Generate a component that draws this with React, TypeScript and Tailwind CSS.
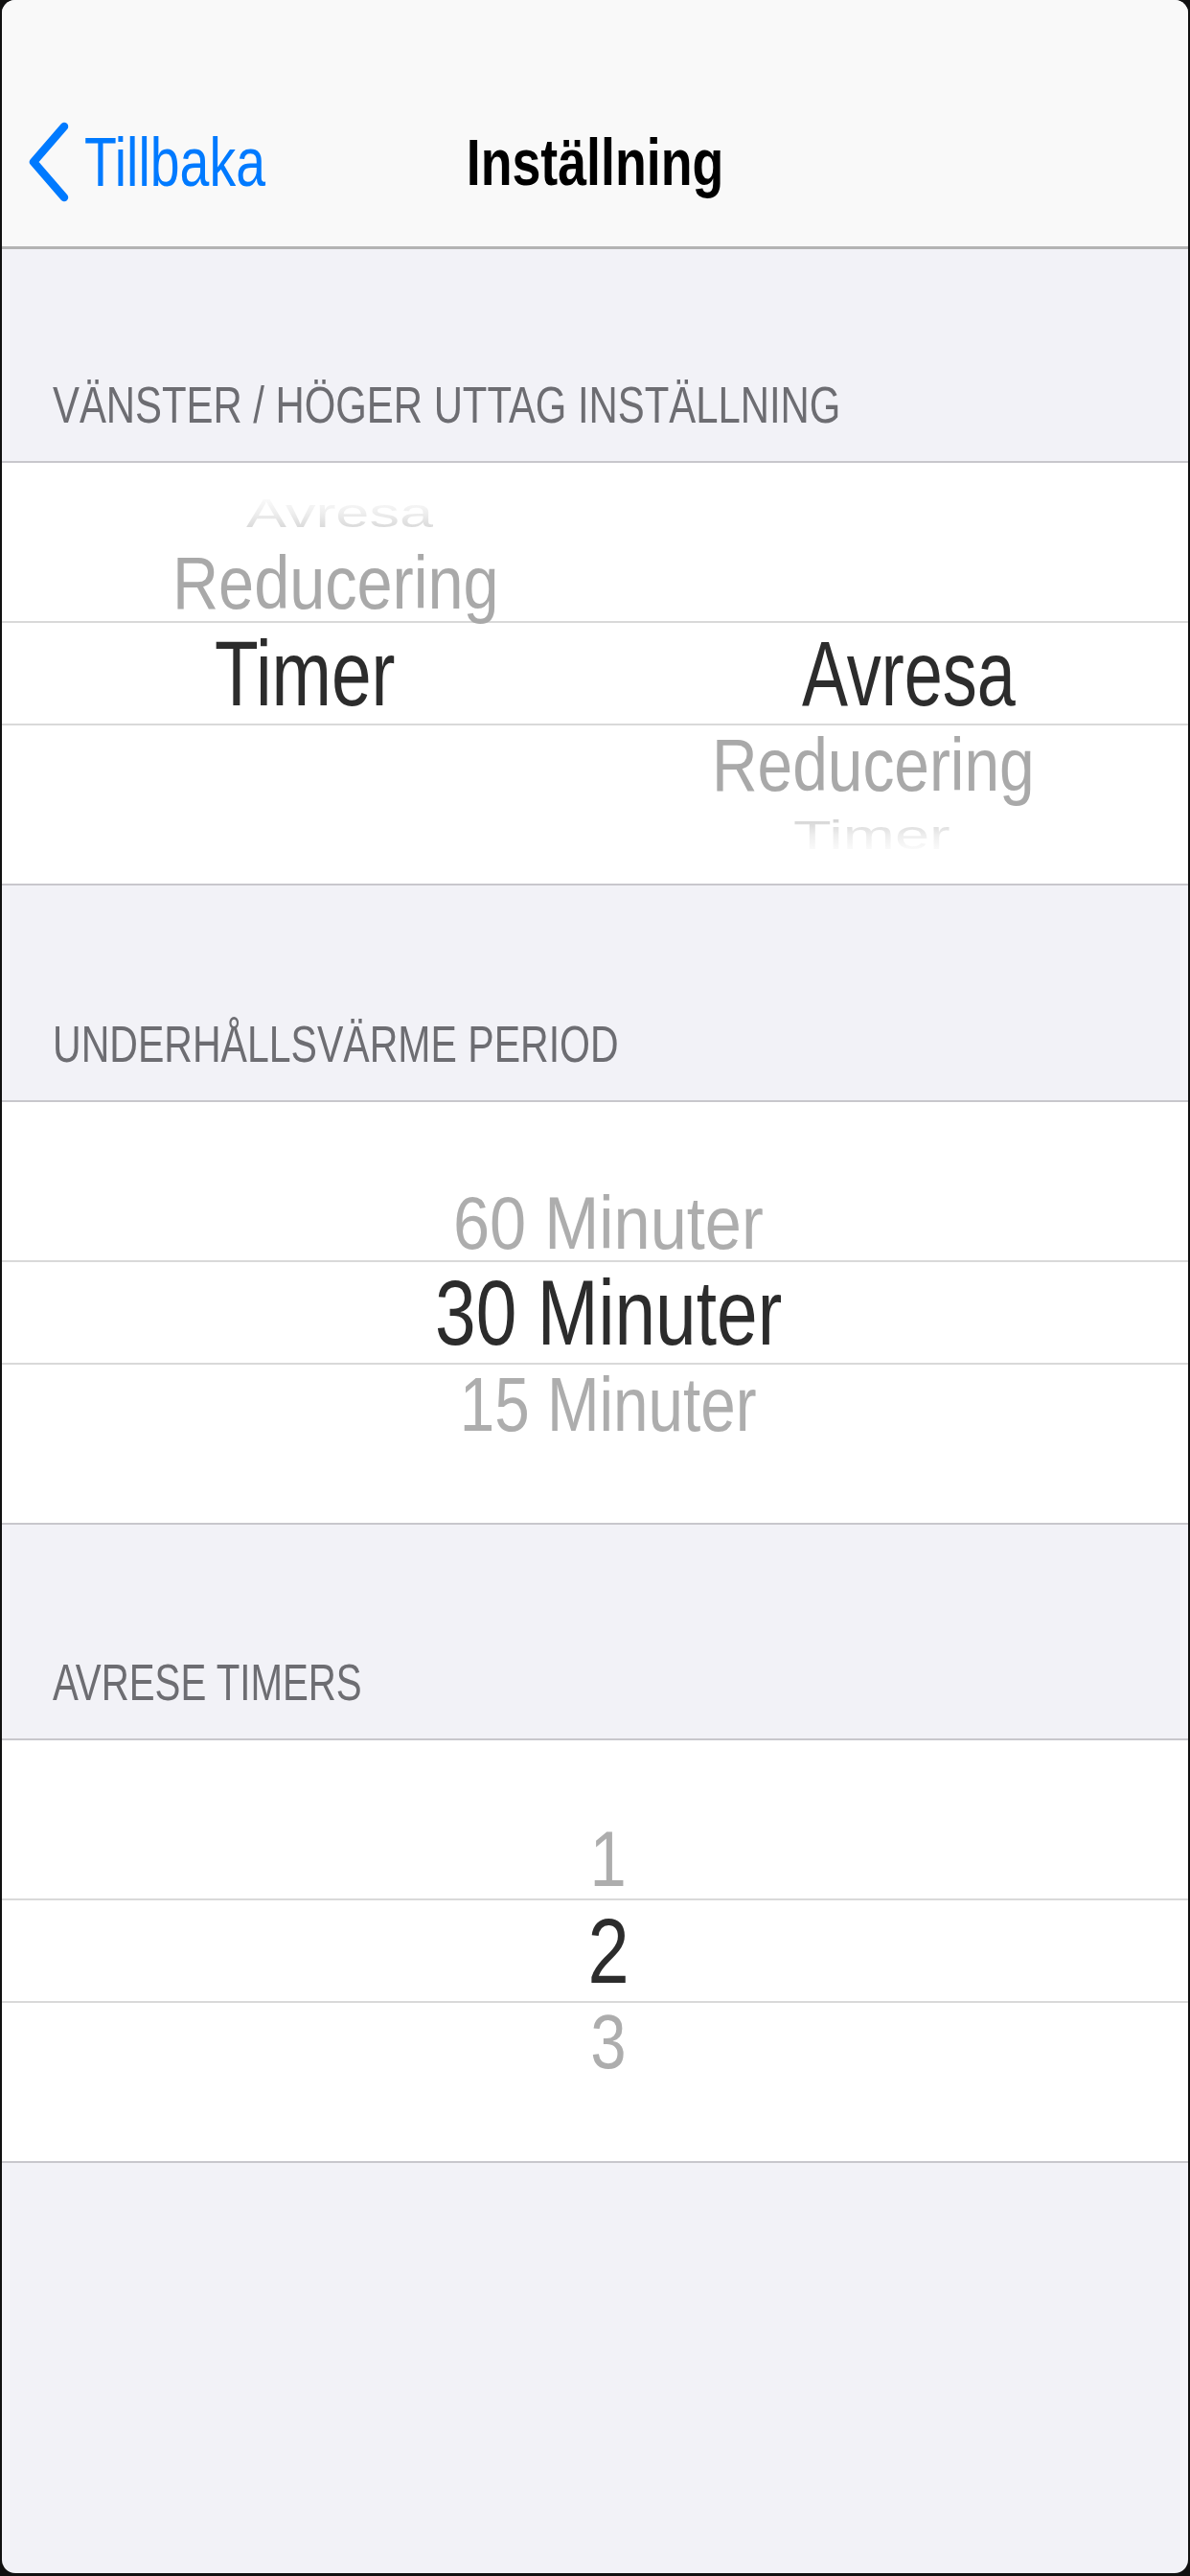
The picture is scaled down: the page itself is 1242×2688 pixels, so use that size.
import React from 'react';

const SectionHeader: React.FC<{ title: string; h: string; sx: string }> = ({ title, h, sx }) => {
  return (
    <div className={`${h} shrink-0 flex items-end pb-[32px] pl-[53px]`}>
      <span className={`inline-block whitespace-nowrap origin-left text-[54px] leading-none text-[#6d6d72] ${sx}`}>
        {title}
      </span>
    </div>
  );
};

const BackChevron = () => (
  <svg width="48" height="90" viewBox="0 0 48 90" fill="none">
    <polyline
      points="40,8 8,45 40,82"
      stroke="#007aff"
      strokeWidth={8.5}
      strokeLinecap="round"
      strokeLinejoin="round"
    />
  </svg>
);

export default function App() {
  return (
    <div className="w-[1242px] h-[2688px] bg-[#111111] px-[2px] pb-[3px] overflow-hidden font-['Liberation_Sans',Arial,sans-serif]">
      <div className="h-full rounded-[14px] overflow-hidden bg-[#f2f2f7] flex flex-col">
        {/* nav bar */}
        <div className="h-[260px] shrink-0 bg-[#f9f9f9] border-b-[3px] border-[#b3b3b3] pt-[80px] grid grid-cols-[1fr_auto_1fr] items-center">
          <div className="flex items-center pl-[25px]">
            <BackChevron />
            <span className="ml-[13px] inline-block origin-left scale-x-[0.77] text-[72px] leading-none text-[#007aff]">
              Tillbaka
            </span>
          </div>
          <span className="inline-block origin-center scale-x-[0.79] text-[68px] leading-none font-bold text-black">
            Inställning
          </span>
          <div />
        </div>

        <SectionHeader title="VÄNSTER / HÖGER UTTAG INSTÄLLNING" h="h-[221px]" sx="scale-x-[0.775]" />

        {/* picker 1: two columns */}
        <div className="h-[443px] shrink-0 bg-white border-y-2 border-[#c8c7cc] flex flex-col">
          <div className="h-[165px] grid grid-cols-2">
            <div className="flex flex-col justify-end items-start pb-[1px]">
              <div className="pl-[255px] mb-[3px]">
                <span className="inline-block origin-center scale-y-[0.67] text-[63px] leading-none bg-linear-to-b from-white via-[#eeeeee] to-[#d2d2d2] bg-clip-text text-transparent">
                  Avresa
                </span>
              </div>
              <div className="pl-[178px]">
                <span className="inline-block origin-left scale-x-[0.865] text-[77px] leading-none text-[#a9a9a9]">
                  Reducering
                </span>
              </div>
            </div>
            <div />
          </div>
          <div className="h-[109px] border-y-2 border-[#d9d9d9] grid grid-cols-2 items-center">
            <div className="pl-[222px]">
              <span className="inline-block origin-left scale-x-[0.78] text-[96px] leading-none text-[#2c2c2c]">
                Timer
              </span>
            </div>
            <div className="pl-[216px]">
              <span className="inline-block origin-left scale-x-[0.75] text-[96px] leading-none text-[#2c2c2c]">
                Avresa
              </span>
            </div>
          </div>
          <div className="h-[165px] grid grid-cols-2">
            <div />
            <div className="flex flex-col items-start pt-[3px]">
              <div className="pl-[122px]">
                <span className="inline-block origin-left scale-x-[0.855] text-[77px] leading-none text-[#a9a9a9]">
                  Reducering
                </span>
              </div>
              <div className="pl-[207px] mt-[2px]">
                <span className="inline-block origin-center scale-y-[0.65] text-[65px] leading-none bg-linear-to-b from-[#cdcdcd] via-[#eeeeee] to-white bg-clip-text text-transparent">
                  Timer
                </span>
              </div>
            </div>
          </div>
        </div>

        <SectionHeader title="UNDERHÅLLSVÄRME PERIOD" h="h-[224px]" sx="scale-x-[0.76]" />

        {/* picker 2 */}
        <div className="h-[443px] shrink-0 bg-white border-y-2 border-[#c8c7cc] flex flex-col">
          <div className="h-[165px] flex flex-col justify-end items-center pl-[28px]">
            <span className="inline-block origin-center scale-x-[0.89] text-[77px] leading-none text-[#adadad]">
              60 Minuter
            </span>
          </div>
          <div className="h-[109px] border-y-2 border-[#d9d9d9] flex items-center justify-center pl-[28px]">
            <span className="inline-block origin-center scale-x-[0.79] text-[97px] leading-none text-[#2c2c2c]">
              30 Minuter
            </span>
          </div>
          <div className="h-[165px] flex flex-col items-center pt-[2px] pl-[28px]">
            <span className="inline-block origin-center scale-x-[0.83] text-[79px] leading-none text-[#adadad]">
              15 Minuter
            </span>
          </div>
        </div>

        <SectionHeader title="AVRESE TIMERS" h="h-[223px]" sx="scale-x-[0.745]" />

        {/* picker 3 */}
        <div className="h-[443px] shrink-0 bg-white border-y-2 border-[#c8c7cc] flex flex-col">
          <div className="h-[165px] flex flex-col justify-end items-center pl-[28px]">
            <span className="inline-block origin-center scale-x-[0.85] text-[81px] leading-none text-[#adadad]">
              1
            </span>
          </div>
          <div className="h-[109px] border-y-2 border-[#d9d9d9] flex items-center justify-center pl-[28px]">
            <span className="inline-block origin-center scale-x-[0.8] text-[97px] leading-none text-[#2c2c2c]">
              2
            </span>
          </div>
          <div className="h-[165px] flex flex-col items-center pt-[1px] pl-[28px]">
            <span className="inline-block origin-center scale-x-[0.85] text-[79px] leading-none text-[#adadad]">
              3
            </span>
          </div>
        </div>

        <div className="flex-1" />
      </div>
    </div>
  );
}
